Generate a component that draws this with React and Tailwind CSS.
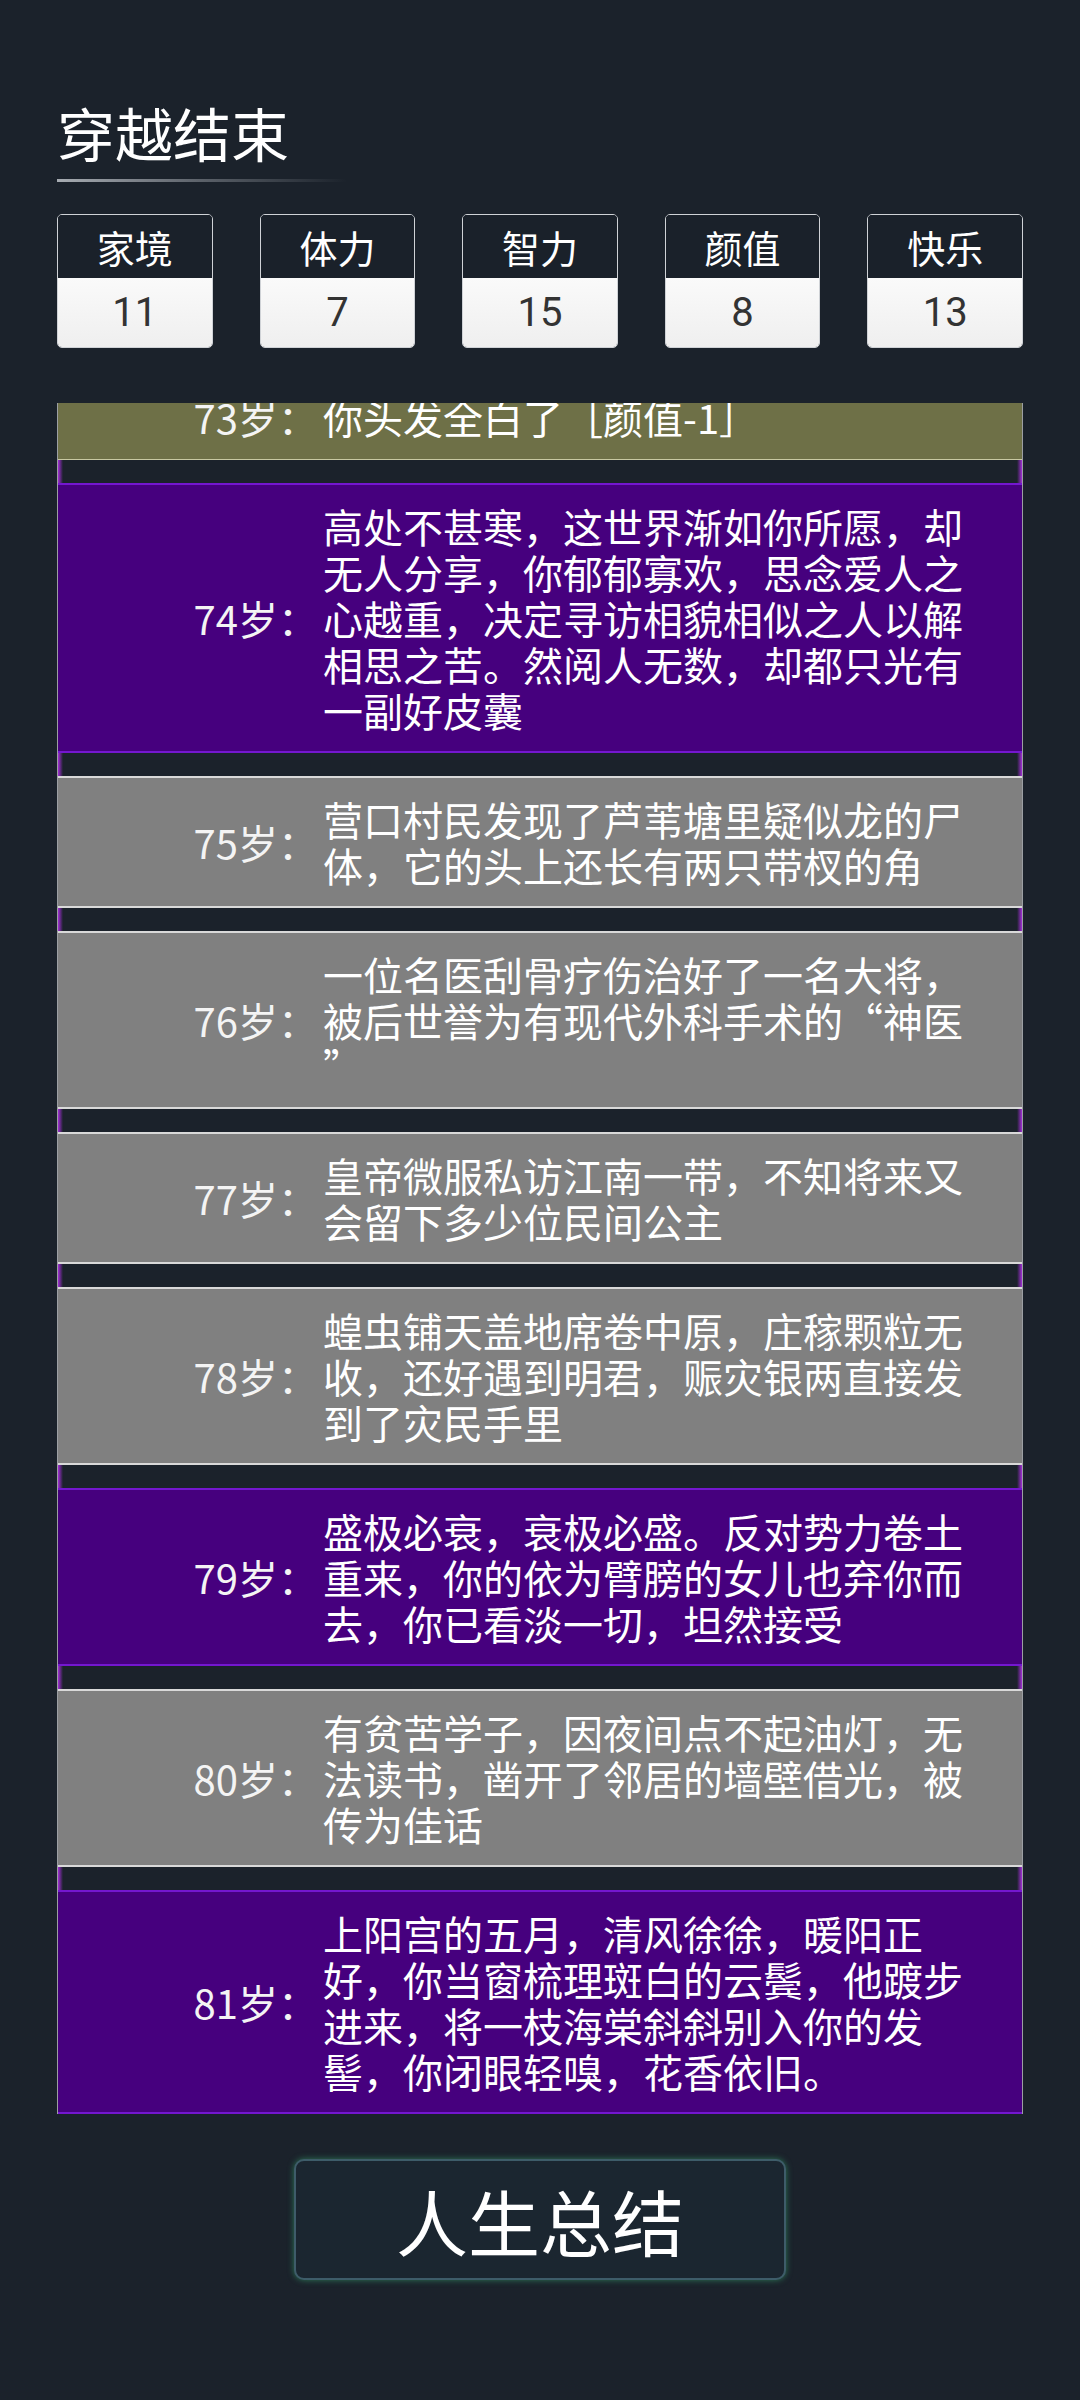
import React from 'react';

const stats = [
  { name: '家境', value: 11 },
  { name: '体力', value: 7 },
  { name: '智力', value: 15 },
  { name: '颜值', value: 8 },
  { name: '快乐', value: 13 },
];

// 背景色ごとの枠線
const tones = {
  olive: 'bg-[#6e7047] border-y border-[#c9c9a2] py-[19px]',
  purple: 'bg-[#46007e] border-y-2 border-[#7417cf] py-[18px]',
  gray: 'bg-[#808080] border-y-2 border-[#d9d9d9] py-[18px]',
};

const events = [
  { age: 73, tone: 'olive', text: '你头发全白了［颜值-1］' },
  {
    age: 74,
    tone: 'purple',
    text: '高处不甚寒，这世界渐如你所愿，却无人分享，你郁郁寡欢，思念爱人之心越重，决定寻访相貌相似之人以解相思之苦。然阅人无数，却都只光有一副好皮囊',
  },
  { age: 75, tone: 'gray', text: '营口村民发现了芦苇塘里疑似龙的尸体，它的头上还长有两只带杈的角' },
  {
    age: 76,
    tone: 'gray',
    text: (
      <>
        一位名医刮骨疗伤治好了一名大将，被后世誉为有现代外科手术的“神医
        <br />”
      </>
    ),
  },
  { age: 77, tone: 'gray', text: '皇帝微服私访江南一带，不知将来又会留下多少位民间公主' },
  { age: 78, tone: 'gray', text: '蝗虫铺天盖地席卷中原，庄稼颗粒无收，还好遇到明君，赈灾银两直接发到了灾民手里' },
  { age: 79, tone: 'purple', text: '盛极必衰，衰极必盛。反对势力卷土重来，你的依为臂膀的女儿也弃你而去，你已看淡一切，坦然接受' },
  { age: 80, tone: 'gray', text: '有贫苦学子，因夜间点不起油灯，无法读书，凿开了邻居的墙壁借光，被传为佳话' },
  {
    age: 81,
    tone: 'purple',
    text: '上阳宫的五月，清风徐徐，暖阳正好，你当窗梳理斑白的云鬓，他踱步进来，将一枝海棠斜斜别入你的发髻，你闭眼轻嗅，花香依旧。',
  },
];

function StatCard({ name, value }) {
  return (
    <div className="flex h-[134px] flex-col overflow-hidden rounded-[5px] border border-[#cfd2d6]">
      <div className="flex h-[63px] items-center justify-center bg-[#1a212a] text-[38px] leading-none text-white">
        {name}
      </div>
      <div className="flex flex-1 items-center justify-center bg-gradient-to-b from-[#fafafa] to-[#efefef] font-['Roboto','Noto_Sans',sans-serif] text-[40px] leading-none text-[#333]">
        {value}
      </div>
    </div>
  );
}

function Gap() {
  return (
    <div className="h-[23px] bg-[linear-gradient(to_right,#a22fd6,transparent_5px,transparent_calc(100%-5px),#a22fd6)]" />
  );
}

function EventRow({ age, tone, text, first }) {
  return (
    <div className={`flex items-center ${tones[tone]} ${first ? '-mt-[29px]' : ''}`}>
      <div className="w-[265px] shrink-0 pr-[5px] text-right text-[40px] leading-[46px] text-[#f4f4f4]">
        {age}岁：
      </div>
      <div className="flex-1 pr-[47px] text-[40px] leading-[46px] text-white">{text}</div>
    </div>
  );
}

export default function App() {
  return (
    <div className="min-h-[2400px] w-full bg-[#1b222b] px-[57px] pt-[97px] font-['Noto_Sans_CJK_SC','Noto_Sans',sans-serif]">
      {/* タイトル */}
      <h1 className="text-[58px] leading-[70px] text-white">穿越结束</h1>
      <div className="mt-[12px] h-[3px] w-[290px] bg-gradient-to-r from-[#a7acb2] via-[#5b6169] to-transparent" />

      {/* 属性 */}
      <div className="mt-[32px] grid grid-cols-5 gap-[47px]">
        {stats.map((s) => (
          <StatCard key={s.name} {...s} />
        ))}
      </div>

      {/* 人生経歴 */}
      <div className="mt-[55px] overflow-hidden border-x border-[#9c9fa3]">
        {events.map((e, i) => (
          <React.Fragment key={e.age}>
            {i > 0 && <Gap />}
            <EventRow {...e} first={i === 0} />
          </React.Fragment>
        ))}
      </div>

      <div className="mt-[45px] flex justify-center">
        <button className="flex h-[121px] w-[492px] items-center justify-center rounded-[10px] border-2 border-[#3e5c69] bg-[#1b2630] text-[72px] leading-none text-white shadow-[0_0_6px_#2c7656]">
          人生总结
        </button>
      </div>
    </div>
  );
}
